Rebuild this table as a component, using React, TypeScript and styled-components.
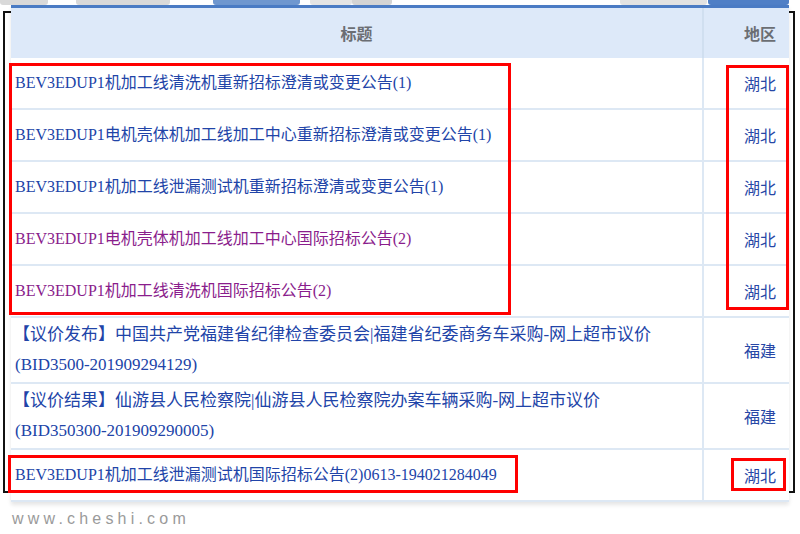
import styled, { createGlobalStyle } from 'styled-components';

const GlobalStyle = createGlobalStyle`
  html, body {
    margin: 0;
    padding: 0;
    background: #fff;
  }
  body {
    font-family: "Liberation Serif", "Noto Sans CJK SC", serif;
  }
`;

const Page = styled.div`
  position: relative;
  width: 800px;
  height: 534px;
  overflow: hidden;
  background: #fff;
`;

const TabStrip = styled.div`
  display: flex;
  height: 5px;
`;

const Tab = styled.div<{ $w: number; $gap: number; $color: string }>`
  width: ${(p) => p.$w}px;
  margin-left: ${(p) => p.$gap}px;
  background: ${(p) => p.$color};
  border-radius: 0 0 3px 3px;
`;

const Frame = styled.div`
  position: absolute;
  left: 3px;
  top: 11px;
  width: 788px;
  height: 478px;
  border: 2px solid #111;
`;

const Table = styled.div`
  position: relative;
  margin-left: 11px;
  width: 778px;
  border-top: 3px solid #4a7bc4;
  background: #fff;
  box-shadow: 0 3px 4px rgba(0, 0, 0, 0.1);
  display: grid;
  grid-template-columns: 693px 85px;
`;

const HeadCell = styled.div<{ $divider?: boolean }>`
  height: 50px;
  background: #dde9f9;
  display: flex;
  align-items: center;
  justify-content: ${(p) => (p.$divider ? 'center' : 'flex-end')};
  padding-right: ${(p) => (p.$divider ? 0 : 13)}px;
  border-right: ${(p) => (p.$divider ? '2px solid #d0dff0' : 'none')};
  font-family: "Noto Sans CJK SC", sans-serif;
  font-size: 16px;
  font-weight: 700;
  color: #6b6e73;
`;

const Cell = styled.div<{ $tall?: boolean }>`
  height: ${(p) => (p.$tall ? 64 : 50)}px;
  border-bottom: 2px solid #dde8f4;
  display: flex;
  align-items: center;
`;

const TitleCell = styled(Cell)`
  border-right: 2px solid #dde8f4;
  padding-left: 4px;
`;

const RegionCell = styled(Cell)`
  justify-content: flex-end;
  padding-right: 13px;
  font-family: "Noto Sans CJK SC", sans-serif;
  font-size: 16px;
  color: #2747a6;
`;

const Title = styled.div<{ $visited?: boolean; $tall?: boolean }>`
  font-size: ${(p) => (p.$tall ? 17 : 16)}px;
  line-height: ${(p) => (p.$tall ? 30 : 20)}px;
  white-space: nowrap;
  color: ${(p) => (p.$visited ? '#8a1d8c' : '#2144a8')};
`;

const Line = styled.div<{ $indent?: number }>`
  margin-left: ${(p) => p.$indent ?? 0}px;
`;

const Watermark = styled.div`
  margin-top: 8px;
  padding-left: 12px;
  font-family: "Liberation Sans", Arial, sans-serif;
  font-size: 16px;
  line-height: 18px;
  letter-spacing: 4.2px;
  color: #9a9a9a;
`;

const RedBox = styled.div`
  position: absolute;
  border: 3px solid #f00;
  box-sizing: border-box;
`;

type Row = {
  lines: string[];
  region: string;
  visited?: boolean;
};

const rows: Row[] = [
  { lines: ['BEV3EDUP1机加工线清洗机重新招标澄清或变更公告(1)'], region: '湖北' },
  { lines: ['BEV3EDUP1电机壳体机加工线加工中心重新招标澄清或变更公告(1)'], region: '湖北' },
  { lines: ['BEV3EDUP1机加工线泄漏测试机重新招标澄清或变更公告(1)'], region: '湖北' },
  { lines: ['BEV3EDUP1电机壳体机加工线加工中心国际招标公告(2)'], region: '湖北', visited: true },
  { lines: ['BEV3EDUP1机加工线清洗机国际招标公告(2)'], region: '湖北', visited: true },
  {
    lines: ['【议价发布】中国共产党福建省纪律检查委员会|福建省纪委商务车采购-网上超市议价', '(BID3500-201909294129)'],
    region: '福建',
  },
  {
    lines: ['【议价结果】仙游县人民检察院|仙游县人民检察院办案车辆采购-网上超市议价', '(BID350300-201909290005)'],
    region: '福建',
  },
  { lines: ['BEV3EDUP1机加工线泄漏测试机国际招标公告(2)0613-194021284049'], region: '湖北' },
];

const tabs = [
  { w: 48, gap: 0, color: '#d9d9d9' },
  { w: 94, gap: 28, color: '#d9d9d9' },
  { w: 87, gap: 43, color: '#6f97cf' },
  { w: 42, gap: 10, color: '#e4e4e4' },
  { w: 40, gap: 0, color: '#d4d4d4' },
  { w: 87, gap: 228, color: '#e2e2e2' },
  { w: 81, gap: 1, color: '#4f7fc6' },
];

const boxes = [
  { left: 9, top: 63, width: 502, height: 252 },
  { left: 726, top: 65, width: 63, height: 245 },
  { left: 8, top: 455, width: 510, height: 38 },
  { left: 731, top: 458, width: 55, height: 33 },
];

export default function App() {
  return (
    <Page>
      <GlobalStyle />
      <Frame />
      <TabStrip>
        {tabs.map((t, i) => (
          <Tab key={i} $w={t.w} $gap={t.gap} $color={t.color} />
        ))}
      </TabStrip>
      <Table>
        <HeadCell $divider>标题</HeadCell>
        <HeadCell>地区</HeadCell>
        {rows.map((r, i) => {
          const tall = r.lines.length > 1;
          return [
            <TitleCell key={`t${i}`} $tall={tall}>
              <Title $visited={r.visited} $tall={tall}>
                {r.lines.map((l, j) => (
                  <Line key={j} $indent={tall && j === 0 ? -2 : 0}>
                    {l}
                  </Line>
                ))}
              </Title>
            </TitleCell>,
            <RegionCell key={`r${i}`} $tall={tall}>
              {r.region}
            </RegionCell>,
          ];
        })}
      </Table>
      <Watermark>www.cheshi.com</Watermark>
      {boxes.map((b, i) => (
        <RedBox key={i} style={{ left: b.left, top: b.top, width: b.width, height: b.height }} />
      ))}
    </Page>
  );
}
